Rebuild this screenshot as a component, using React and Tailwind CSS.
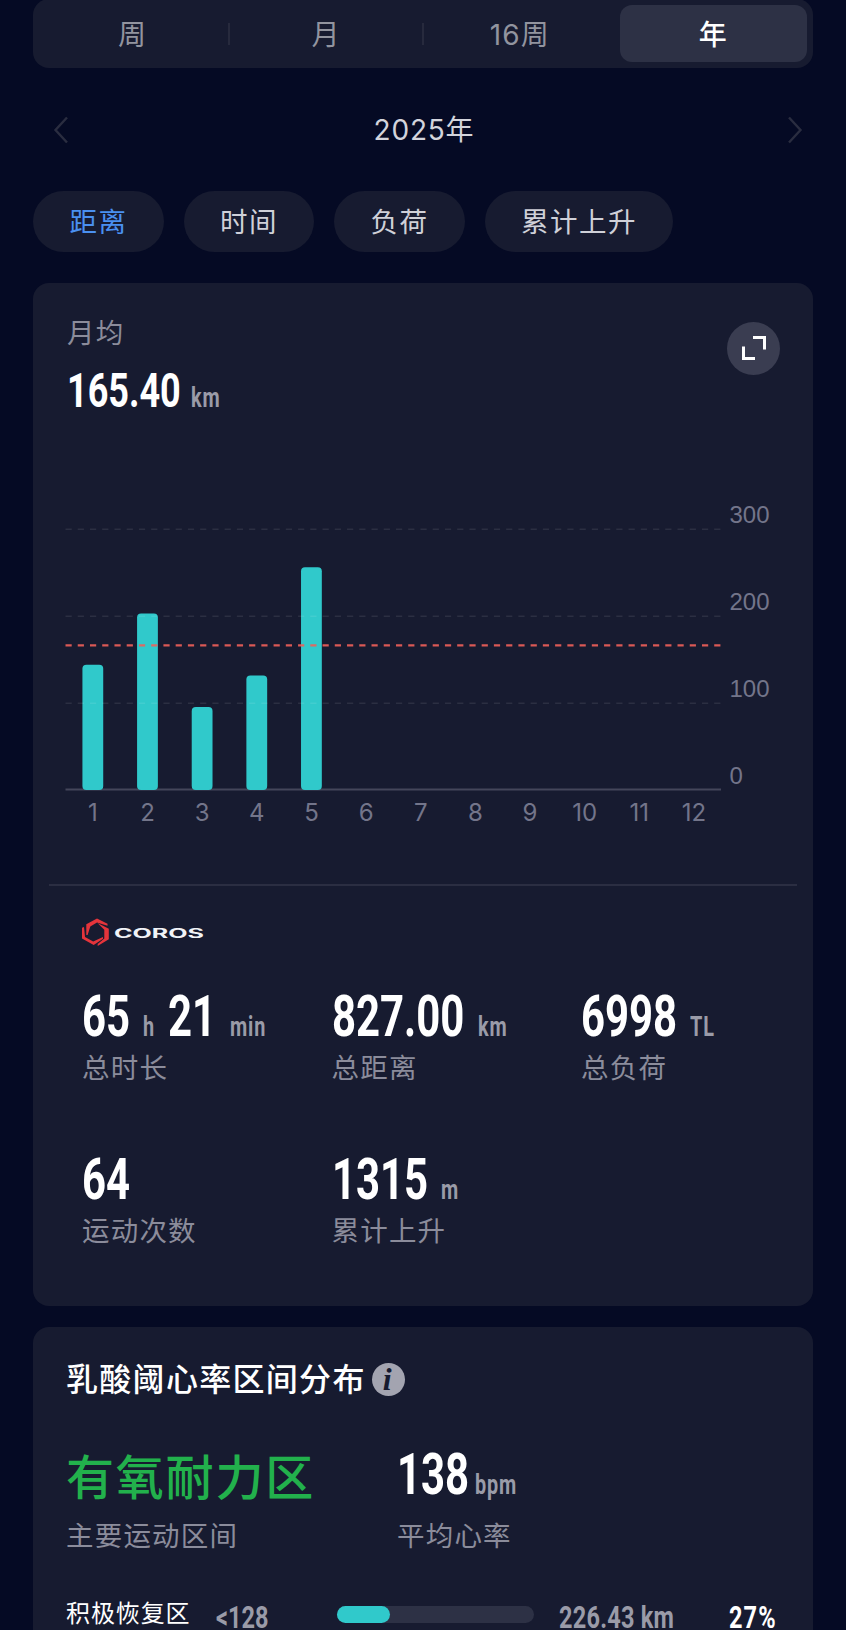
import clsx from "clsx";

const tabs = ["周", "月", "16周", "年"];
const metrics = ["距离", "时间", "负荷", "累计上升"];
const monthly = [144, 203, 95.5, 131.5, 256];
const months = [1, 2, 3, 4, 5, 6, 7, 8, 9, 10, 11, 12];

const stats = [
  {
    label: "总时长",
    parts: [
      { value: "65", width: "w-[61px]" },
      { unit: "h", width: "w-[25px]" },
      { value: "21", width: "w-[62px]" },
      { unit: "min" },
    ],
  },
  {
    label: "总距离",
    parts: [{ value: "827.00", width: "w-[146px]" }, { unit: "km" }],
  },
  {
    label: "总负荷",
    parts: [{ value: "6998", width: "w-[109px]" }, { unit: "TL" }],
  },
  { label: "运动次数", parts: [{ value: "64" }] },
  {
    label: "累计上升",
    parts: [{ value: "1315", width: "w-[109px]" }, { unit: "m" }],
  },
];

// Roboto squeezed horizontally to get a condensed DIN look
function Condensed({ children, className, width }) {
  return (
    <span className={clsx("block shrink-0 whitespace-nowrap", width)}>
      <span
        className={clsx(
          "inline-block origin-left scale-x-[0.735] font-['Roboto'] font-bold",
          className,
        )}
      >
        {children}
      </span>
    </span>
  );
}

function Unit({ children, width }) {
  return (
    <Condensed
      width={width}
      className="text-[27px] leading-none tracking-[1.2px] text-[#9a9ba8]"
    >
      {children}
    </Condensed>
  );
}

function Label({ children }) {
  return (
    <div className="h-8 pt-0.5 text-[27.5px] leading-8 tracking-[1.2px] whitespace-nowrap text-[#8b8c9b]">
      {children}
    </div>
  );
}

function Chevron({ flip }) {
  return (
    <svg
      width="16"
      height="28"
      viewBox="0 0 16 28"
      fill="none"
      className={clsx(flip && "-scale-x-100")}
    >
      <path d="M14 1.5 2.5 14 14 26.5" stroke="#2a2d40" strokeWidth="2.4" />
    </svg>
  );
}

function Chart() {
  const left = 32.5;
  const right = 688;
  const base = 300;
  const step = 54.65;
  const y = (v) => base - v * 0.87;

  return (
    <svg width="780" height="340" viewBox="0 0 780 340" className="mt-20 block">
      <line x1={left} x2={right} y1="299.5" y2="299.5" stroke="#44465a" strokeWidth="2" />

      {monthly.map((v, i) => (
        <rect
          key={i}
          x={left + step * (i + 0.5) - 10.4}
          y={y(v)}
          width="20.8"
          height={base - y(v)}
          rx="4"
          fill="#30c9cb"
        />
      ))}

      {[100, 200, 300].map((v) => (
        <line
          key={v}
          x1={left}
          x2={right}
          y1={y(v) + 0.3}
          y2={y(v) + 0.3}
          stroke="#ffffff"
          strokeOpacity="0.09"
          strokeWidth="1.4"
          strokeDasharray="6.2 6.04"
        />
      ))}

      <line
        x1={left}
        x2={right}
        y1="155.4"
        y2="155.4"
        stroke="#f0605a"
        strokeOpacity="0.9"
        strokeWidth="2.4"
        strokeDasharray="6.2 6.04"
      />

      {[0, 100, 200, 300].map((v) => (
        <text
          key={v}
          x="696.5"
          y={y(v) - 6.5}
          fill="#73758a"
          className="font-['Liberation_Sans'] text-[24px]"
        >
          {v}
        </text>
      ))}

      {months.map((m, i) => (
        <text
          key={m}
          x={left + step * (i + 0.5)}
          y="331"
          textAnchor="middle"
          fill="#73758a"
          className="font-['Inter'] text-[24px]"
        >
          {m}
        </text>
      ))}
    </svg>
  );
}

function Logo() {
  return (
    <svg width="124" height="30" viewBox="0 0 124 30" className="mt-8 ml-[49px] block">
      <g fill="#e5343b">
        <path d="M4.3 6.3 15 0.4 25.5 5.8V7.8L15 4.6 8.3 8.5 5.6 17H4.3z" />
        <path d="M15.5 4.9 26.8 10.7V21.3L15.7 28V26L22.3 20.5V11.8z" />
        <path d="M0 9.8 2 9 3 19 11.2 23.5 21 19V20.8L11.7 27 0 20.5z" />
      </g>
      <text
        x="32"
        y="19.8"
        textLength="90"
        lengthAdjust="spacingAndGlyphs"
        fill="#f1f3f7"
        className="font-['Inter'] text-[12.5px] font-bold"
      >
        COROS
      </text>
    </svg>
  );
}

function App() {
  return (
    <div className="flex h-[1630px] w-[846px] flex-col overflow-hidden bg-[#050a24] px-[33px] font-['Inter','Noto_Sans_CJK_SC',sans-serif]">
      <div className="-mt-px flex h-[69px] shrink-0 items-center justify-between rounded-2xl bg-[#171b30] px-1.5">
        {tabs.map((tab, i) => (
          <div key={tab} className="contents">
            <div
              className={clsx(
                "flex h-[57px] w-[187px] items-center justify-center rounded-xl pt-0.5 text-[28px] tracking-[1.2px]",
                i === 3 ? "bg-[#2d3145] font-medium text-white" : "text-[#92949f]",
              )}
            >
              {tab}
            </div>
            {i < 3 && (
              <div className={clsx("h-[22px] w-0.5", i < 2 && "bg-[#272a3d]")} />
            )}
          </div>
        ))}
      </div>

      <div className="mt-[42px] flex h-10 shrink-0 items-center justify-between pr-[10px] pl-5">
        <Chevron />
        <div className="mr-2 text-[28px] tracking-[0.8px] text-[#d3d4dc]">2025年</div>
        <Chevron flip />
      </div>

      <div className="mt-[41px] flex shrink-0 gap-5">
        {metrics.map((m, i) => (
          <div
            key={m}
            className={clsx(
              "flex h-[61px] items-center rounded-full bg-[#171b30] pt-0.5 pr-9 pl-[36.5px] text-[27.5px] tracking-[1.5px]",
              i === 0 ? "text-[#4a90f0]" : "text-[#cfd0d8]",
            )}
          >
            {m}
          </div>
        ))}
      </div>

      <div className="mt-[31px] h-[1023px] shrink-0 rounded-2xl bg-[#171b30] pt-8">
        <div className="flex h-[95px] justify-between pr-[33px] pl-[34px]">
          <div>
            <Label>月均</Label>
            <div className="mt-6 flex h-10 items-baseline">
              <Condensed className="text-[49px] leading-10 text-white" width="w-[124px]">
                165.40
              </Condensed>
              <Unit>km</Unit>
            </div>
          </div>
          <div className="mt-[6.5px] flex size-[53px] items-center justify-center rounded-full bg-[#3a3d51]">
            <svg width="24" height="24" viewBox="0 0 24 24" fill="none" stroke="#fff" strokeWidth="3">
              <path d="M11 1.5H22.5V13.5M13 22.5H1.5V10.5" />
            </svg>
          </div>
        </div>

        <Chart />

        <div className="mx-4 mt-[54px] h-0.5 bg-[#2b2e42]" />

        <Logo />

        <div className="mt-[41px] ml-[49px] grid grid-cols-[249.5px_249.5px_1fr] gap-y-[70px]">
          {stats.map((s) => (
            <div key={s.label}>
              <div className="mb-[5px] flex h-14 items-baseline">
                {s.parts.map((p) =>
                  p.unit ? (
                    <Unit key={p.unit} width={p.width}>
                      {p.unit}
                    </Unit>
                  ) : (
                    <Condensed
                      key={p.value}
                      width={p.width}
                      className="text-[57px] leading-[56px] text-white"
                    >
                      {p.value}
                    </Condensed>
                  ),
                )}
              </div>
              <Label>{s.label}</Label>
            </div>
          ))}
        </div>
      </div>

      <div className="mt-[21px] h-[400px] shrink-0 rounded-2xl bg-[#171b30] px-[33px] pt-[33px]">
        <div className="flex h-10 items-center gap-[6px]">
          <h2 className="text-[32px] leading-10 font-medium tracking-[1.3px] text-white">
            乳酸阈心率区间分布
          </h2>
          <div className="-mt-0.5 flex size-[33px] items-center justify-center rounded-full bg-[#a3a4b0] pr-0.5 font-['Liberation_Serif'] text-[32px] leading-none font-bold text-[#171b30] italic">
            i
          </div>
        </div>

        <div className="mt-[47px] flex">
          <div className="w-[331px]">
            <div className="mb-[15px] h-14 pt-[3px] text-[48px] leading-[56px] font-medium tracking-[1.8px] text-[#22b14c]">
              有氧耐力区
            </div>
            <Label>主要运动区间</Label>
          </div>
          <div>
            <div className="mb-[15px] flex h-14 items-baseline">
              <Condensed className="text-[57px] leading-[56px] text-white" width="w-[78px]">
                138
              </Condensed>
              <Unit>bpm</Unit>
            </div>
            <Label>平均心率</Label>
          </div>
        </div>

        <div className="mt-[48px] flex h-8 items-center">
          <div className="w-[150px] shrink-0 text-[24px] leading-8 tracking-[0.9px] whitespace-nowrap text-white">
            积极恢复区
          </div>
          <Condensed className="mt-1.5 text-[32px] leading-8 text-[#9a9ba8]" width="w-[121px]">
            &lt;128
          </Condensed>
          <div className="mr-[25px] h-[17px] w-[197px] shrink-0 rounded-full bg-[#2d3145]">
            <div className="h-full rounded-full bg-[#30c9cb]" style={{ width: "27%" }} />
          </div>
          <Condensed
            className="mt-1.5 text-[32px] leading-8 tracking-[0.3px] text-[#9a9ba8]"
            width="w-[170px]"
          >
            226.43 km
          </Condensed>
          <Condensed
            className="mt-1.5 text-[32px] leading-8 tracking-[1.5px] text-white"
            width="w-[51px]"
          >
            27%
          </Condensed>
        </div>
      </div>
    </div>
  );
}

export default App;
